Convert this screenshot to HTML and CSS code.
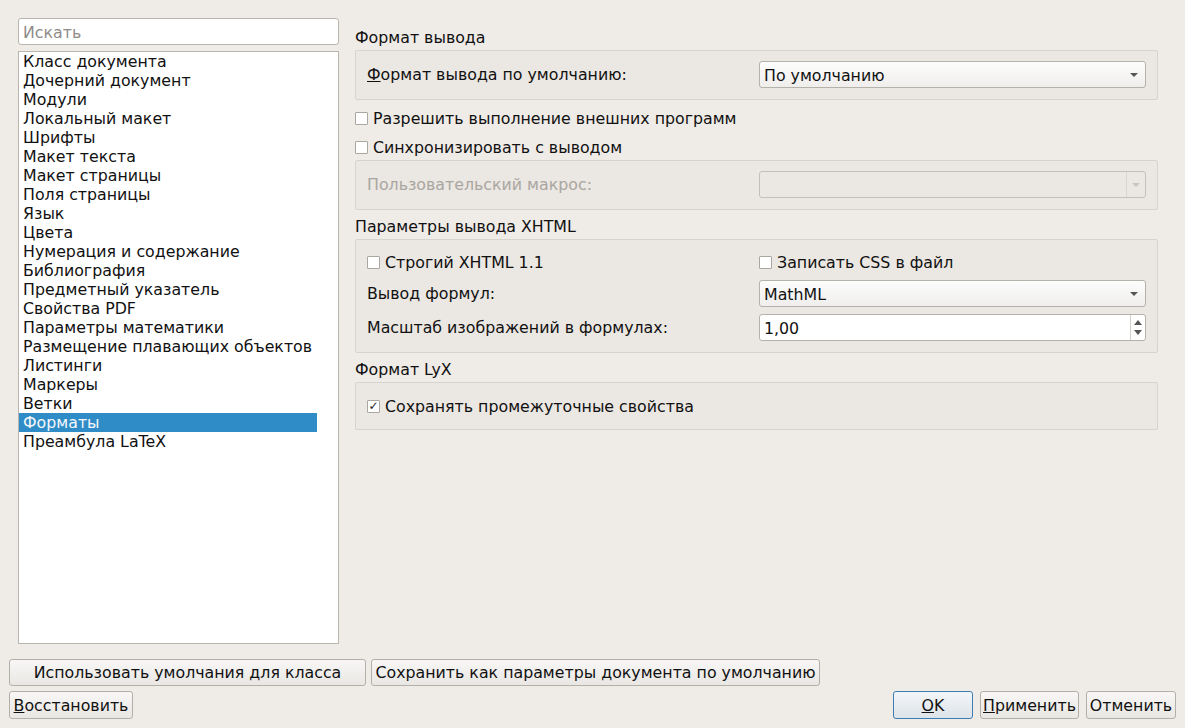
FILE: index.html
```html
<!DOCTYPE html>
<html lang="ru">
<head>
    <meta charset="UTF-8">
    <title>Настройки документа</title>
    <link rel="stylesheet" href="styles.css">
</head>
<body>
    <div class="dialog">
        <div class="main">
            <div class="sidebar">
                <input class="search" type="text" placeholder="Искать">
                <ul class="nav">
                    <li>Класс документа</li>
                    <li>Дочерний документ</li>
                    <li>Модули</li>
                    <li>Локальный макет</li>
                    <li>Шрифты</li>
                    <li>Макет текста</li>
                    <li>Макет страницы</li>
                    <li>Поля страницы</li>
                    <li>Язык</li>
                    <li>Цвета</li>
                    <li>Нумерация и содержание</li>
                    <li>Библиография</li>
                    <li>Предметный указатель</li>
                    <li>Свойства PDF</li>
                    <li>Параметры математики</li>
                    <li>Размещение плавающих объектов</li>
                    <li>Листинги</li>
                    <li>Маркеры</li>
                    <li>Ветки</li>
                    <li class="selected">Форматы</li>
                    <li>Преамбула LaTeX</li>
                </ul>
            </div>

            <div class="content">
                <div class="section-title">Формат вывода</div>
                <div class="group">
                    <div class="form-row">
                        <span class="label"><u>Ф</u>ормат вывода по умолчанию:</span>
                        <div class="combo"><span>По умолчанию</span><span class="arrow"></span></div>
                    </div>
                </div>

                <div class="check-row first"><span class="checkbox"></span>Разрешить выполнение внешних программ</div>
                <div class="check-row"><span class="checkbox"></span>Синхронизировать с выводом</div>

                <div class="group">
                    <div class="form-row">
                        <span class="label disabled">Пользовательский макрос:</span>
                        <div class="combo disabled"><span></span><span class="drop"><span class="arrow"></span></span></div>
                    </div>
                </div>

                <div class="section-title">Параметры вывода XHTML</div>
                <div class="group">
                    <div class="form-row checks">
                        <div class="check-row"><span class="checkbox"></span>Строгий XHTML 1.1</div>
                        <div class="check-row"><span class="checkbox"></span>Записать CSS в файл</div>
                    </div>
                    <div class="form-row">
                        <span class="label">Вывод формул:</span>
                        <div class="combo"><span>MathML</span><span class="arrow"></span></div>
                    </div>
                    <div class="form-row">
                        <span class="label">Масштаб изображений в формулах:</span>
                        <div class="spin">
                            <span class="value">1,00</span>
                            <span class="spin-btns"><span class="up"></span><span class="down"></span></span>
                        </div>
                    </div>
                </div>

                <div class="section-title">Формат LyX</div>
                <div class="group checks-only">
                    <div class="check-row"><span class="checkbox checked">&#10003;</span>Сохранять промежуточные свойства</div>
                </div>
            </div>
        </div>

        <div class="btn-row">
            <button class="btn wide">Использовать умолчания для класса</button>
            <button class="btn save">Сохранить как параметры документа по умолчанию</button>
        </div>
        <div class="btn-row last">
            <button class="btn reset"><u>В</u>осстановить</button>
            <div class="actions">
                <button class="btn default"><u>O</u>K</button>
                <button class="btn apply"><u>П</u>рименить</button>
                <button class="btn cancel">Отменить</button>
            </div>
        </div>
    </div>
</body>
</html>
```

FILE: styles.css
```css
body {
    margin: 0;
    background-color: #efebe7;
    font-family: 'DejaVu Sans', sans-serif;
    font-size: 15.8px;
    color: #111;
}

.dialog {
    display: flex;
    flex-direction: column;
    width: 1185px;
    height: 728px;
    box-sizing: border-box;
    padding: 18px 9px 9px 9px;
}

.main {
    flex: 1;
    display: flex;
    gap: 16px;
    padding-left: 9px;
    min-height: 0;
}

/* left side: search + page list */
.sidebar {
    width: 321px;
    display: flex;
    flex-direction: column;
    gap: 6px;
}

.search {
    height: 27px;
    box-sizing: border-box;
    border: 1px solid #b9b5af;
    border-radius: 3px;
    padding: 1px 4px 0 4px;
    font-family: inherit;
    font-size: 15.8px;
    background: #fff;
    outline: none;
}

.search::placeholder {
    color: #8e8c89;
}

.nav {
    flex: 1;
    list-style: none;
    margin: 0;
    padding: 0;
    background: #fff;
    border: 1px solid #b9b5af;
}

.nav li {
    width: 294px;
    height: 19px;
    line-height: 20px;
    padding-left: 4px;
    white-space: nowrap;
}

.nav li.selected {
    background-color: #308cc6;
    color: #f4f8fc;
}

/* right side */
.content {
    width: 803px;
}

.section-title {
    height: 20px;
    line-height: 20px;
    margin-top: 7px;
    margin-bottom: 2px;
}

.section-title:first-child {
    margin-top: 10px;
}

.group {
    background-color: #ebe7e2;
    border: 1px solid #d7d3cd;
    border-radius: 2px;
    padding: 10px 11px 11px 11px;
}

.group.checks-only {
    padding: 12px 11px 12px 11px;
}

.group .check-row {
    margin: 0;
}

.form-row {
    display: grid;
    grid-template-columns: 392px 387px;
    align-items: center;
}

.form-row + .form-row {
    margin-top: 7px;
}

.form-row.checks {
    margin-top: 1px;
    margin-bottom: 1px;
}

.label {
    white-space: nowrap;
}

.label.disabled {
    color: #a9a6a1;
}

.combo {
    height: 27px;
    box-sizing: border-box;
    border: 1px solid #b5b1ab;
    border-radius: 3px;
    background: linear-gradient(#fdfdfd, #efeeec);
    display: flex;
    align-items: center;
    justify-content: space-between;
    padding: 1px 7px 0 4px;
}

.combo.disabled {
    background: #ebe7e2;
    border-color: #c4c0ba;
    padding: 0;
}

.combo .drop {
    width: 18px;
    height: 100%;
    border-left: 1px solid #d9d5cf;
    display: flex;
    align-items: center;
    justify-content: center;
}

.arrow {
    width: 0;
    height: 0;
    border-left: 4px solid transparent;
    border-right: 4px solid transparent;
    border-top: 4px solid #555;
}

.combo.disabled .arrow {
    border-top-color: #c9c6c1;
}

.spin {
    height: 27px;
    box-sizing: border-box;
    border: 1px solid #b5b1ab;
    border-radius: 3px;
    background: #fff;
    display: flex;
    align-items: center;
    justify-content: space-between;
    padding-left: 4px;
}

.spin .value {
    padding-top: 1px;
}

.spin-btns {
    width: 14px;
    height: 100%;
    border-left: 1px solid #d4d0ca;
    display: flex;
    flex-direction: column;
    align-items: center;
    justify-content: center;
    gap: 5px;
}

.spin-btns .up {
    border-left: 4px solid transparent;
    border-right: 4px solid transparent;
    border-bottom: 5px solid #555;
}

.spin-btns .down {
    border-left: 4px solid transparent;
    border-right: 4px solid transparent;
    border-top: 5px solid #555;
}

.check-row {
    height: 22px;
    display: flex;
    align-items: center;
    margin-top: 7px;
    white-space: nowrap;
}

.check-row.first {
    margin-top: 7px;
}

.check-row + .group {
    margin-top: 2px;
}

.checkbox {
    width: 13px;
    height: 13px;
    box-sizing: border-box;
    border: 1px solid #aaa6a0;
    border-radius: 1px;
    background: #fff;
    margin-right: 5px;
    font-size: 12px;
    font-weight: bold;
    line-height: 11px;
    text-align: center;
    color: #222;
}

/* bottom buttons */
.btn-row {
    display: flex;
    gap: 5px;
    margin-top: 15px;
}

.btn-row.last {
    margin-top: 5px;
    justify-content: space-between;
}

.btn {
    height: 27px;
    padding: 0;
    font-family: 'DejaVu Sans', sans-serif;
    font-size: 15.8px;
    color: #111;
    background: linear-gradient(#f8f7f6, #e9e7e3);
    border: 1px solid #b3afa9;
    border-radius: 3px;
    white-space: nowrap;
}

.btn-row.last .btn {
    height: 28px;
}

.btn.wide {
    width: 357px;
}

.btn.save {
    width: 449px;
}

.btn.reset {
    width: 124px;
}

.actions {
    display: flex;
    gap: 7px;
}

.btn.default {
    width: 80px;
    border-color: #3c7db4;
    background: linear-gradient(#f3f6f9, #dde3e8);
}

.btn.apply {
    width: 99px;
}

.btn.cancel {
    width: 90px;
}
```
